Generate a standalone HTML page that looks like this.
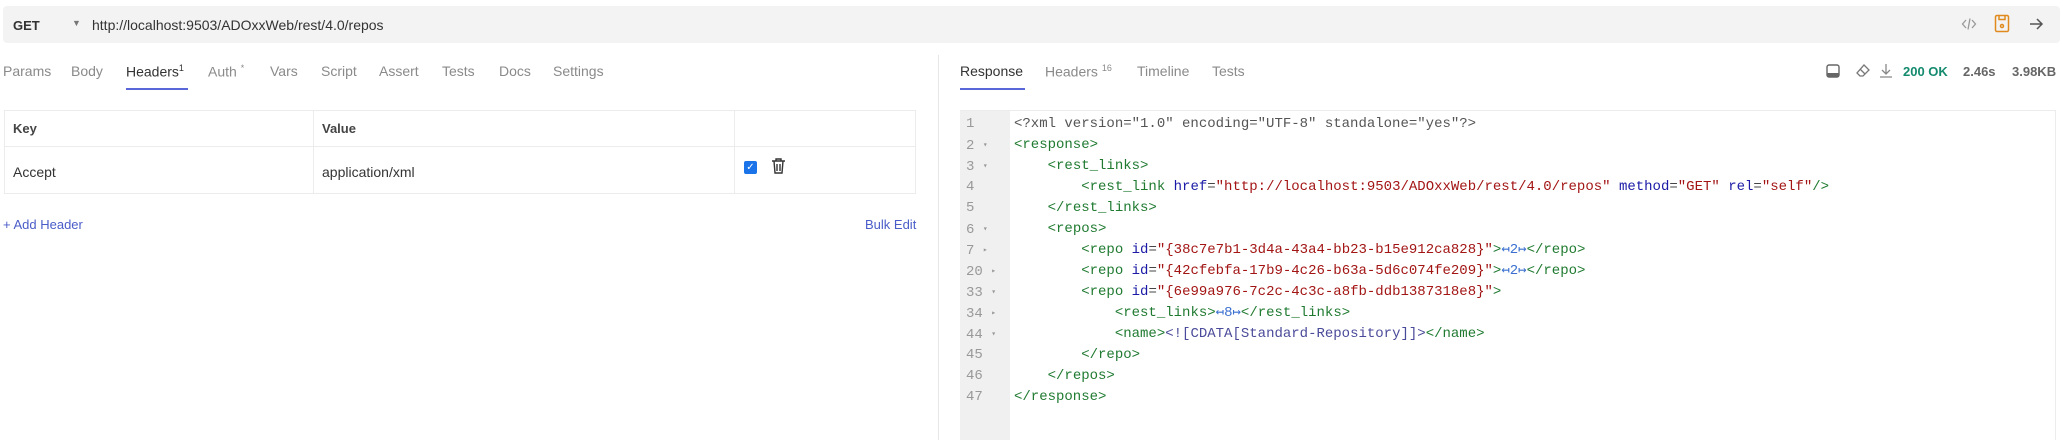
<!DOCTYPE html>
<html><head><meta charset="utf-8"><style>
*{margin:0;padding:0;box-sizing:border-box}
body{width:2063px;height:440px;background:#fff;font-family:"Liberation Sans",sans-serif;font-size:13px;color:#343434;position:relative;overflow:hidden}
.a{position:absolute;white-space:nowrap}
.bar{left:3px;top:6px;width:2057px;height:37px;background:#f3f3f3;border-radius:4px}
.tab{top:63px;font-size:14px;color:#8a8a8a}
.mono{font-family:"Liberation Mono",monospace;font-size:14px}
.lns div{height:21px;line-height:21px}
.lns span{font-size:8px;vertical-align:middle}
pre.a{white-space:pre}
.t{color:#1f7a30}.n{color:#1a1aa6}.s{color:#a31515}.f{color:#3a6fd0}.c{color:#4a4a9a}
</style></head><body>
<div class="a bar"></div>
<div class="a" style="left:13px;top:18px;font-weight:bold;font-size:13px;color:#333">GET</div>
<div class="a" style="left:72px;top:18px;font-size:9px;color:#777">▼</div>
<div class="a" style="left:92px;top:17px;font-size:14px;color:#333">http://localhost:9503/ADOxxWeb/rest/4.0/repos</div>
<svg class="a" style="left:1960px;top:15px" width="18" height="18" viewBox="0 0 18 18" fill="none" stroke="#999" stroke-width="1.3"><path d="M6 5L2.5 9 6 13M12 5l3.5 4-3.5 4M10 3.5L8 14.5"/></svg>
<svg class="a" style="left:1994px;top:14px" width="16" height="19" viewBox="0 0 16 19" fill="none" stroke="#e08a1e" stroke-width="1.5"><rect x="1.5" y="1.5" width="13" height="16" rx="1.5"/><path d="M5 1.5v4h6v-4"/><circle cx="8" cy="12" r="1.5"/></svg>
<svg class="a" style="left:2028px;top:15px" width="16" height="18" viewBox="0 0 16 18" fill="none" stroke="#555" stroke-width="1.5"><path d="M2 9h12M9 4l5 5-5 5"/></svg>

<div class="a tab" style="left:3px">Params</div>
<div class="a tab" style="left:71px">Body</div>
<div class="a tab" style="left:126px;color:#333">Headers<sup style="font-size:9px">1</sup></div>
<div class="a tab" style="left:208px">Auth <sup style="font-size:9px">*</sup></div>
<div class="a tab" style="left:270px">Vars</div>
<div class="a tab" style="left:321px">Script</div>
<div class="a tab" style="left:379px">Assert</div>
<div class="a tab" style="left:442px">Tests</div>
<div class="a tab" style="left:499px">Docs</div>
<div class="a tab" style="left:553px">Settings</div>
<div class="a" style="left:126px;top:88px;width:62px;height:2px;background:#5a67d8"></div>

<div class="a" style="left:938px;top:55px;width:1px;height:385px;background:#e6e6e6"></div>

<div class="a" style="left:4px;top:110px;width:912px;height:84px;border:1px solid #ececec"></div>
<div class="a" style="left:4px;top:146px;width:912px;height:1px;background:#ececec"></div>
<div class="a" style="left:313px;top:110px;width:1px;height:84px;background:#ececec"></div>
<div class="a" style="left:734px;top:110px;width:1px;height:84px;background:#ececec"></div>
<div class="a" style="left:13px;top:121px;font-weight:bold;color:#444">Key</div>
<div class="a" style="left:322px;top:121px;font-weight:bold;color:#444">Value</div>
<div class="a" style="left:13px;top:164px;font-size:14px">Accept</div>
<div class="a" style="left:322px;top:164px;font-size:14px">application/xml</div>
<div class="a" style="left:744px;top:161px;width:13px;height:13px;background:#1a73e8;border-radius:2px;color:#fff;font-size:10px;line-height:13px;text-align:center">✓</div>
<svg class="a" style="left:771px;top:157px" width="15" height="18" viewBox="0 0 15 18" fill="none" stroke="#333" stroke-width="1.4"><path d="M1 4h13M5 4V2h5v2M3 4l1 12h7l1-12M6 7v7M9 7v7"/></svg>
<div class="a" style="left:3px;top:217px;color:#4a5cc8">+ Add Header</div>
<div class="a" style="left:865px;top:217px;color:#4a5cc8">Bulk Edit</div>

<div class="a tab" style="left:960px;color:#333">Response</div>
<div class="a tab" style="left:1045px">Headers <sup style="font-size:9px">16</sup></div>
<div class="a tab" style="left:1137px">Timeline</div>
<div class="a tab" style="left:1212px">Tests</div>
<div class="a" style="left:960px;top:88px;width:65px;height:2px;background:#5a67d8"></div>

<svg class="a" style="left:1826px;top:64px" width="14" height="14" viewBox="0 0 14 14"><rect x="1" y="1" width="12" height="12" rx="2" fill="none" stroke="#666" stroke-width="1.4"/><rect x="1" y="9" width="12" height="4" fill="#666"/></svg>
<svg class="a" style="left:1855px;top:63px" width="16" height="16" viewBox="0 0 16 16" fill="none" stroke="#777" stroke-width="1.3"><path d="M9 2l5 5-6 6H5L2 10z M5 6l5 5"/></svg>
<svg class="a" style="left:1878px;top:62px" width="16" height="17" viewBox="0 0 16 17" fill="none" stroke="#888" stroke-width="1.3"><path d="M8 2v10M4 8l4 4 4-4M2 15h12"/></svg>
<div class="a" style="left:1903px;top:64px;font-weight:bold;color:#148a6e">200 OK</div>
<div class="a" style="left:1963px;top:64px;font-weight:bold;color:#666">2.46s</div>
<div class="a" style="left:2012px;top:64px;font-weight:bold;color:#666">3.98KB</div>

<div class="a" style="left:960px;top:110px;width:1096px;height:330px;border:1px solid #ececec;border-bottom:none"></div>
<div class="a" style="left:960px;top:111px;width:50px;height:329px;background:#f0f0f0"></div>
<div class="a mono lns" style="left:966px;top:114px;color:#999">
<div>1</div><div>2 <span>▾</span></div><div>3 <span>▾</span></div><div>4</div><div>5</div><div>6 <span>▾</span></div><div>7 <span>▸</span></div><div>20 <span>▸</span></div><div>33 <span>▾</span></div><div>34 <span>▸</span></div><div>44 <span>▾</span></div><div>45</div><div>46</div><div>47</div>
</div>
<pre class="a mono" style="left:1014px;top:114px;line-height:21px;color:#444"><span style="color:#555">&lt;?xml version="1.0" encoding="UTF-8" standalone="yes"?&gt;</span>
<span class="t">&lt;response&gt;</span>
    <span class="t">&lt;rest_links&gt;</span>
        <span class="t">&lt;rest_link</span> <span class="n">href</span>=<span class="s">"http://localhost:9503/ADOxxWeb/rest/4.0/repos"</span> <span class="n">method</span>=<span class="s">"GET"</span> <span class="n">rel</span>=<span class="s">"self"</span><span class="t">/&gt;</span>
    <span class="t">&lt;/rest_links&gt;</span>
    <span class="t">&lt;repos&gt;</span>
        <span class="t">&lt;repo</span> <span class="n">id</span>=<span class="s">"{38c7e7b1-3d4a-43a4-bb23-b15e912ca828}"</span><span class="t">&gt;</span><span class="f">↤2↦</span><span class="t">&lt;/repo&gt;</span>
        <span class="t">&lt;repo</span> <span class="n">id</span>=<span class="s">"{42cfebfa-17b9-4c26-b63a-5d6c074fe209}"</span><span class="t">&gt;</span><span class="f">↤2↦</span><span class="t">&lt;/repo&gt;</span>
        <span class="t">&lt;repo</span> <span class="n">id</span>=<span class="s">"{6e99a976-7c2c-4c3c-a8fb-ddb1387318e8}"</span><span class="t">&gt;</span>
            <span class="t">&lt;rest_links&gt;</span><span class="f">↤8↦</span><span class="t">&lt;/rest_links&gt;</span>
            <span class="t">&lt;name&gt;</span><span class="c">&lt;![CDATA[Standard-Repository]]&gt;</span><span class="t">&lt;/name&gt;</span>
        <span class="t">&lt;/repo&gt;</span>
    <span class="t">&lt;/repos&gt;</span>
<span class="t">&lt;/response&gt;</span></pre>
</body></html>
